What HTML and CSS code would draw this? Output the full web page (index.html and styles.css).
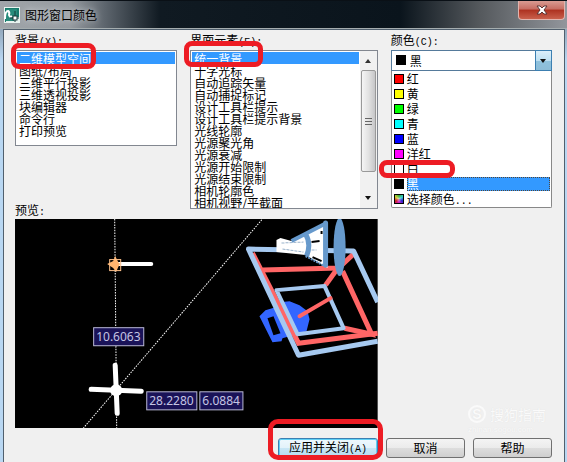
FILE: index.html
```html
<!DOCTYPE html>
<html lang="zh-CN">
<head>
<meta charset="utf-8">
<title>图形窗口颜色</title>
<link rel="stylesheet" href="styles.css">
</head>
<body>
<main class="window">
  <header class="titlebar">
    <svg class="app-icon" viewBox="0 0 16 16" aria-hidden="true">
      <rect width="16" height="16" fill="#e8f3f0"/>
      <path d="M1 1h14v9h-2V3H2v12H1z" fill="#177a6b"/>
      <path d="M2 2h11v8h-3v4H2z" fill="#278b7b"/>
      <path d="M1 12Q1 4 4 4Q6 5 5 8Q6 11 8 9" fill="none" stroke="#fff" stroke-width="2"/>
      <path d="M11 4v11M6 11h9" stroke="#163c3c"/>
      <rect x="9" y="9" width="4" height="4" fill="#fff" stroke="#163c3c"/>
    </svg>
    <h1 class="title">图形窗口颜色</h1>
    <button class="close" type="button" aria-label="关闭">
      <svg viewBox="0 0 12 10" aria-hidden="true">
        <path d="M1 1h3l2 2 2-2h3L8 5l3 4H8L6 7 4 9H1l3-4z" fill="#fff" stroke="#5b3535"/>
      </svg>
    </button>
  </header>
  <form class="panel">
    <div class="field context">
      <label for="context">背景<span class="latin">(X):</span></label>
      <select class="list short" id="context" size="7">
        <option selected>二维模型空间</option>
        <option>图纸/布局</option>
        <option>三维平行投影</option>
        <option>三维透视投影</option>
        <option>块编辑器</option>
        <option>命令行</option>
        <option>打印预览</option>
      </select>
      <span class="mark mark-context"></span>
    </div>
    <div class="field element">
      <label for="element">界面元素<span class="latin">(E):</span></label>
      <div class="scroll-list">
        <select class="list tall" id="element" size="13">
          <option selected>统一背景</option>
          <option>十字光标</option>
          <option>自动追踪矢量</option>
          <option>自动捕捉标记</option>
          <option>设计工具栏提示</option>
          <option>设计工具栏提示背景</option>
          <option>光线轮廓</option>
          <option>光源聚光角</option>
          <option>光源衰减</option>
          <option>光源开始限制</option>
          <option>光源结束限制</option>
          <option>相机轮廓色</option>
          <option>相机视野/平截面</option>
        </select>
        <div class="scrollbar" aria-hidden="true">
          <span class="arrow up"></span>
          <span class="thumb"><i></i><i></i><i></i></span>
          <span class="arrow down"></span>
        </div>
      </div>
      <span class="mark mark-element"></span>
    </div>
    <div class="field color">
      <label for="color">颜色<span class="latin">(C):</span></label>
      <div class="combo">
        <span class="swatch black"></span>
        <select class="combo-select" id="color"><option>黑</option></select>
        <span class="combo-arrow"><span class="arrow down"></span></span>
        <ul class="menu" role="listbox" aria-label="颜色">
          <li role="option"><span class="swatch red"></span><span class="name">红</span></li>
          <li role="option"><span class="swatch yellow"></span><span class="name">黄</span></li>
          <li role="option"><span class="swatch green"></span><span class="name">绿</span></li>
          <li role="option"><span class="swatch cyan"></span><span class="name">青</span></li>
          <li role="option"><span class="swatch blue"></span><span class="name">蓝</span></li>
          <li role="option"><span class="swatch magenta"></span><span class="name">洋红</span></li>
          <li role="option"><span class="swatch white"></span><span class="name">白</span></li>
          <li role="option" aria-selected="true"><span class="swatch black"></span><span class="name">黑</span></li>
          <li role="option"><span class="swatch spectrum"></span><span class="name">选择颜色<span class="latin">...</span></span></li>
        </ul>
        <span class="mark mark-color"></span>
      </div>
    </div>
    <section class="preview">
      <h2 class="caption">预览<span class="latin">:</span></h2>
      <svg class="canvas" viewBox="15 219 362 209" role="img" aria-label="预览">
        <rect x="15" y="219" width="362" height="209" fill="#000"/>
        <g stroke="#fff" stroke-dasharray="1.500 1.200" fill="none">
          <path d="M114.500 219L116.500 428"/>
          <path d="M83 428L262 219"/>
        </g>
        <path d="M259 316L265 310L275 307L279 302L289 301L299 305L307 311L309 319L306 331L282 338L281 341L272 342Z" fill="#3366ff"/>
        <path d="M267 318L273 316L280 333L273 335Z" fill="#000"/>
        <g fill="none" stroke="#ff6666" stroke-width="5">
          <path d="M252 253L298 343L377 333"/>
          <path d="M262 270L338 268L355 252"/>
          <path d="M338 267L325 285"/>
          <path d="M342 271L371 334L344 328"/>
        </g>
        <g fill="none" stroke="#a6c9f0" stroke-width="5" stroke-linejoin="round">
          <path d="M377 302L353 251L248 249L298 355L377 341"/>
          <path d="M276 290L324 286L343 328L297 334Z" stroke-width="4"/>
        </g>
        <path d="M299 316L330 298" stroke="#ff6666" stroke-width="4" stroke-linecap="round"/>
        <path d="M276 240L280 238L291 241L325 223L327 268L305 255L276 252Z" fill="#fff"/>
        <path d="M291 241L324 224" stroke="#6699cc" stroke-width="4"/>
        <path d="M305 234Q311 244 306 256" stroke="#6699cc" stroke-width="5" fill="none"/>
        <path d="M325 223V265" stroke="#6699cc" stroke-width="5" stroke-linecap="round"/>
        <path d="M305 256L326 267" stroke="#6699cc" stroke-width="2" stroke-dasharray="2 1"/>
        <path d="M321 231V234M311 242L319 241M312 257L321 261" stroke="#000" stroke-width="2"/>
        <path d="M281 243L303 242M282 249L303 252M311 250H316" stroke="#9ab3cc" stroke-dasharray="3 1"/>
        <ellipse cx="339" cy="247" rx="6" ry="29" fill="#6699cc"/>
        <path d="M118 264H151" stroke="#fff" stroke-width="4" stroke-linecap="round"/>
        <path d="M115 256L118 262L120 264L118 267L116 272L113 268L107 264L113 261Z" fill="#ffb46e"/>
        <rect x="109.500" y="259.500" width="11" height="11" fill="none" stroke="#ffc18b"/>
        <g stroke="#fff" stroke-width="5" stroke-linecap="round">
          <path d="M115 365L117 413M91 389L141 391"/>
        </g>
        <circle cx="116" cy="390" r="6" fill="#fff"/>
        <g fill="#1a1358" stroke="#b9b8d5">
          <rect x="93.500" y="327.500" width="50" height="18"/>
          <rect x="146.500" y="391.500" width="50" height="18"/>
          <rect x="199.500" y="391.500" width="43" height="18"/>
        </g>
        <g class="readout">
          <text x="96" y="341">10.6063</text>
          <text x="149" y="405">28.2280</text>
          <text x="202" y="405">6.0884</text>
        </g>
      </svg>
    </section>
    <aside class="watermark">
      <span class="logo">S</span>
      <span class="brand">搜狗指南</span>
      <span class="site">zhinan.sogou.com</span>
    </aside>
    <footer class="actions">
      <div class="primary-wrap">
        <button class="btn primary" type="button">应用并关闭<span class="latin">(A)</span></button>
        <span class="mark mark-apply"></span>
      </div>
      <button class="btn" type="button">取消</button>
      <button class="btn" type="button">帮助</button>
    </footer>
  </form>
</main>
</body>
</html>
```
FILE: styles.css
```css
* { box-sizing: border-box; }

body {
  margin: 0;
  background: #b9d7f2;
  color: #000;
  font: 12px/12px "Noto Sans CJK SC", sans-serif;
}

.window {
  min-height: 100vh;
  padding: 0 2px 0 3px;
  display: flex;
  flex-direction: column;
  background: linear-gradient(#6f7c8a 0, #b9d7f2 60px, #b9d7f2 100%);
}

.titlebar {
  height: 29px;
  margin: 0 -2px 0 -3px;
  padding: 0 2px 0 4px;
  display: flex;
  align-items: center;
  gap: 5px;
  border-top: 1px solid #0a1016;
  border-bottom: 1px solid #a5adaf;
  background: linear-gradient(90deg, #a0a5aa 0, #969ba0 70px, #5d656d 105px, #101a22 160px, #0a141c 400px, #55595d 480px, #92969c 100%);
}

.app-icon { width: 16px; height: 16px; }

.title {
  flex: 1;
  margin: 0;
  font-size: 12px;
  font-weight: 400;
  line-height: 16px;
  text-shadow: 0 0 6px #e2e7ec;
}

.close {
  align-self: flex-start;
  width: 47px;
  height: 19px;
  padding: 0;
  display: grid;
  place-items: center;
  border: 1px solid #e2b4ae;
  border-top: 0;
  border-radius: 0 0 4px 4px;
  background: linear-gradient(#d99b92 0, #c66d62 45%, #ad3120 50%, #c9604c 100%);
}

.close svg { width: 12px; height: 10px; }

.panel {
  position: relative;
  flex: 1;
  padding: 5px 12px 4px 11px;
  display: grid;
  grid-template-columns: 162fr 187fr 161fr;
  grid-template-rows: auto auto 1fr;
  column-gap: 13px;
  border: 1px solid #51606e;
  border-bottom: 0;
  background: #f0f0f0;
}

.latin { font-family: "Liberation Mono", monospace; font-size: 10px; }

.field { position: relative; }
.field label { display: block; height: 15px; line-height: 10px; }

.list {
  display: block;
  width: 100%;
  padding: 1px;
  border: 1px solid #828790;
  border-radius: 0;
  outline: 0;
  background: #fff;
  color: #000;
  font: inherit;
  overflow: hidden;
  scrollbar-width: none;
}

.short { height: 96px; }
.tall { height: 159px; padding-right: 18px; }

.list option {
  display: flex;
  align-items: center;
  height: 12px;
  min-height: 12px;
  padding: 0 2px;
  line-height: 12px;
}

.list option:checked {
  background: #3399ff linear-gradient(#3399ff, #3399ff);
  color: #fff;
}

.scroll-list { position: relative; }

.scrollbar {
  position: absolute;
  inset: 1px 1px 1px auto;
  width: 17px;
  padding: 8px 1px;
  display: flex;
  flex-direction: column;
  align-items: center;
  background: #f1f1f1;
}

.arrow { border: 3px solid transparent; }
.arrow.up { border-top: 0; border-bottom: 4px solid #333; }
.arrow.down { border-top: 4px solid #111; border-bottom: 0; }
.scrollbar .down { margin-top: auto; }

.thumb {
  width: 15px;
  height: 102px;
  margin-top: 7px;
  display: flex;
  flex-direction: column;
  align-items: center;
  justify-content: center;
  gap: 2px;
  border: 1px solid #999;
  border-radius: 2px;
  background: linear-gradient(90deg, #f5f5f5, #e2e2e2 50%, #c6c6c8);
}

.thumb i { width: 7px; height: 1px; background: #666; }

.combo { position: relative; height: 21px; }

.combo-select {
  appearance: none;
  display: block;
  width: 100%;
  height: 21px;
  padding: 0 18px 0 18px;
  border: 1px solid #557a9b;
  border-radius: 0;
  background: #fff;
  color: #000;
  font: inherit;
}

.combo > .swatch { position: absolute; left: 5px; top: 5px; }

.combo-arrow {
  position: absolute;
  inset: 0 0 0 auto;
  width: 17px;
  display: grid;
  place-items: center;
  border: 1px solid #3c7fb1;
  background: linear-gradient(#dceffa 0, #bfe0f2 50%, #8fc2de 51%, #8dbdd8 100%);
  pointer-events: none;
}

.menu {
  position: absolute;
  inset: 21px 0 auto 0;
  margin: 0;
  padding: 0 1px 1px;
  list-style: none;
  border: 1px solid #888;
  border-top: 0;
  border-radius: 0 0 2px 2px;
  background: #fff;
}

.menu li { display: flex; align-items: center; gap: 3px; height: 15px; padding-left: 1px; }
.name { flex: 1; height: 14px; line-height: 14px; }
.menu [aria-selected="true"] .name { background: #3399ff; color: #fff; outline: 1px dotted #52463a; outline-offset: -1px; }

.swatch { width: 10px; height: 10px; border: 1px solid #000; }
.red { background: #f00; }
.yellow { background: #ff0; }
.green { background: #0f0; }
.cyan { background: #0ff; }
.blue { background: #00f; }
.magenta { background: #f0f; }
.white { background: #fff; }
.black { background: #000; }
.spectrum { background: radial-gradient(circle, #fff8, #0000 60%), conic-gradient(#3a3, #3cc, #22c, #c2c, #c22, #cc3, #3a3); }

.preview { grid-column: 1 / 3; margin-top: -4px; }
.caption { margin: 0; height: 14px; font-size: 12px; font-weight: 400; line-height: 10px; }
.canvas { display: block; width: 100%; height: auto; }

.readout { fill: #c5c5e4; font: 12px "Noto Sans", sans-serif; }

.watermark {
  align-self: end;
  justify-self: end;
  margin: 0 6px -8px 0;
  display: grid;
  grid-template-columns: auto auto;
  align-items: center;
  column-gap: 4px;
  color: #fafafa;
  text-shadow: 0 0 1px #ddd;
}

.logo {
  width: 18px;
  height: 18px;
  border: 2px solid #fafafa;
  border-radius: 50%;
  font: 700 14px/14px "Liberation Sans", sans-serif;
  text-align: center;
}

.brand { font-size: 14px; line-height: 20px; }
.site { grid-column: 1 / 3; font: 8px/12px "Liberation Sans", sans-serif; }

.actions {
  grid-column: 1 / 4;
  align-self: end;
  display: flex;
  justify-content: flex-end;
  gap: 8px;
}

.primary-wrap { position: relative; }

.btn {
  display: block;
  min-width: 79px;
  height: 20px;
  padding: 0 10px;
  border: 1px solid #707070;
  border-radius: 3px;
  background: linear-gradient(#f4f4f4 0, #ebebeb 50%, #dddddd 51%, #cfcfcf 100%);
  color: #000;
  font: inherit;
  white-space: nowrap;
}

.primary {
  min-width: 100px;
  border-color: #3c7fb1;
  background: linear-gradient(#eef8fd 0, #e2f2fa 50%, #c8e6f5 51%, #b5dcf0 100%);
  box-shadow: inset 0 0 0 1px #5fd0f5;
}

.mark {
  position: absolute;
  border: 5px solid #ed1c24;
  border-radius: 8px;
  pointer-events: none;
}

.mark-context { left: -4px; top: 8px; width: 85px; height: 26px; }
.mark-element { left: -6px; top: 6px; width: 79px; height: 26px; }
.mark-color { left: -12px; top: 110px; width: 76px; height: 18px; }
.mark-apply { inset: -19px -5px -2px -10px; border-radius: 10px; }
```
